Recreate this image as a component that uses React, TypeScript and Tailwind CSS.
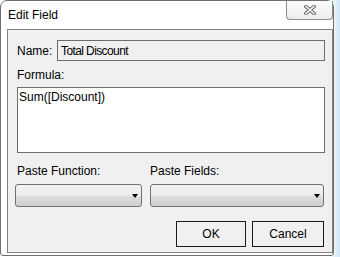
const font = { fontFamily: '"Liberation Sans", Arial, sans-serif' };

function CloseGlyph() {
  return (
    <svg width="12" height="10" viewBox="0 0 12 10">
      <path d="M2 1.5 L10 8.5 M10 1.5 L2 8.5" stroke="#6b6b6b" strokeWidth="3.6" strokeLinecap="square" />
      <path d="M2 1.5 L10 8.5 M10 1.5 L2 8.5" stroke="#f4f4f4" strokeWidth="1.6" strokeLinecap="square" />
    </svg>
  );
}

function Combo({ width }: { width: string }) {
  return (
    <div
      className={`${width} relative h-[23px] rounded-[3px] border border-[#707070]`}
      style={{ background: "linear-gradient(#f2f2f2 0%, #ebebeb 50%, #dddddd 51%, #cfcfcf 100%)" }}
    >
      <div className="absolute right-[3px] top-[9px] h-0 w-0 border-x-[3.5px] border-t-[4px] border-x-transparent border-t-black" />
    </div>
  );
}

export default function App() {
  return (
    <div
      className="flex h-[257px] w-[340px] overflow-hidden bg-white text-[12px] text-black"
      style={{
        ...font,
        background:
          "linear-gradient(90deg, #ffffff 0%, #ffffff 97%, #cfe6f5 100%)",
      }}
    >
      <div className="flex h-[256px] w-[334px] shrink-0 flex-col rounded-t-[7px] rounded-b-[3px] border border-[#6f6f6f] bg-white">
        {/* title bar */}
        <div className="flex h-[28px] shrink-0 items-start">
          <span className="pl-[7px] pt-[7px] leading-[14px]">Edit Field</span>
          <div className="ml-auto flex h-[19px] w-[47px] items-center justify-center rounded-b-[4px] border-x border-b border-[#8c8c8c] bg-gradient-to-b from-[#fdfdfd] to-[#ececec]">
            <CloseGlyph />
          </div>
        </div>

        {/* client area */}
        <div className="ml-[6px] flex h-[224px] w-[326px] flex-col border border-[#828282] bg-[#f0f0f0] px-[7px]">
          <div className="mt-[10px] flex h-[21px] items-center">
            <span className="ml-[2px] w-[40px]">Name:</span>
            <div className="flex h-[21px] w-[268px] items-center border border-[#6d6d6d] bg-[#f0f0f0] pl-[3px] tracking-[-0.6px]">
              Total Discount
            </div>
          </div>

          <div className="ml-[2px] mt-[6px] h-[16px] leading-[16px]">Formula:</div>

          <div className="ml-[2px] mt-[4px] h-[66px] w-[308px] border border-[#6d6d6d] bg-white pl-[1px] pt-[1px] leading-[16px]">
            Sum([Discount])
          </div>

          <div className="mt-[10px] flex h-[16px] leading-[16px]">
            <span className="ml-[2px] w-[133px]">Paste Function:</span>
            <span>Paste Fields:</span>
          </div>

          <div className="mt-[5px] flex gap-[8px]">
            <Combo width="w-[127px]" />
            <Combo width="w-[174px]" />
          </div>

          <div className="mt-[14px] flex justify-end gap-[6px] pr-[1px]">
            <div className="flex h-[26px] w-[70px] items-center justify-center border border-[#1a1a1a] bg-[#f0f0f0]">
              OK
            </div>
            <div className="flex h-[26px] w-[72px] items-center justify-center border border-[#1a1a1a] bg-[#f0f0f0]">
              Cancel
            </div>
          </div>
        </div>
      </div>
    </div>
  );
}
